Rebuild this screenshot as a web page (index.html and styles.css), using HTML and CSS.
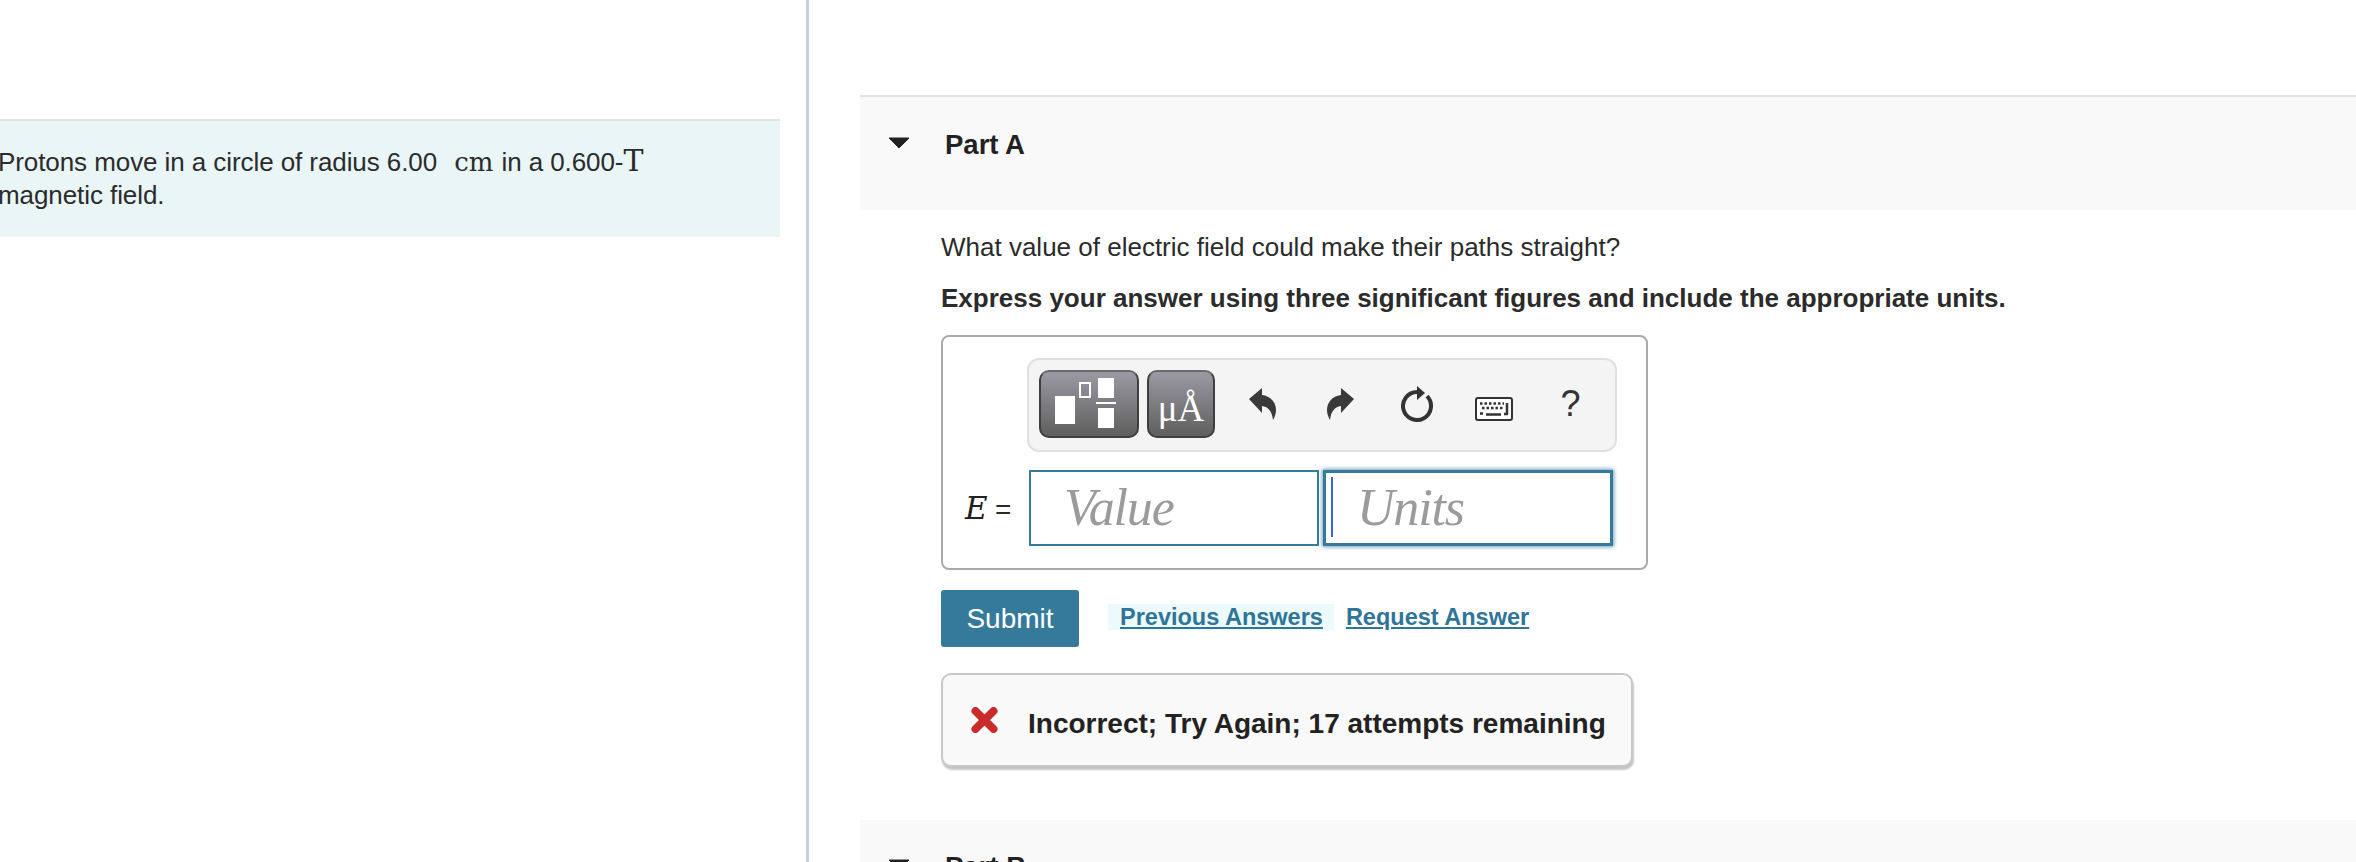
FILE: index.html
```html
<!DOCTYPE html>
<html lang="en">
<head>
<meta charset="utf-8">
<title>Part A</title>
<link rel="stylesheet" href="styles.css">
</head>
<body>
<div class="page">
  <aside class="left">
    <div class="intro">
      <p class="intro-text">Protons move in a circle of radius 6.00 <span class="math unit">cm</span> in a 0.600-<span class="math">T</span><br>magnetic field.</p>
    </div>
  </aside>
  <main class="right">
    <section class="part-head">
      <svg class="caret" width="22" height="12" viewBox="0 0 22 12"><path d="M1 1h20L11 11z" fill="#222" stroke="#222" stroke-linejoin="round"/></svg>
      <h2 class="part-title">Part A</h2>
    </section>
    <section class="part-body">
      <p class="question">What value of electric field could make their paths straight?</p>
      <p class="instruction">Express your answer using three significant figures and include the appropriate units.</p>
      <div class="answer-box">
        <div class="toolbar">
          <button class="tool-dark tool-templates" aria-label="Templates">
            <svg class="tool-svg" width="96" height="64" viewBox="0 0 96 64"><rect x="14" y="24" width="20" height="28" fill="#fff"/><rect x="39" y="11" width="10" height="14" fill="none" stroke="#fff" stroke-width="2"/><rect x="57" y="6" width="16" height="20" fill="#fff"/><rect x="55" y="30" width="20" height="2" fill="#fff"/><rect x="57" y="36" width="16" height="20" fill="#fff"/></svg>
          </button>
          <button class="tool-dark tool-units">μÅ</button>
          <span class="tool-icon tool-first tool-raised">
            <svg class="tool-svg" width="28" height="32" viewBox="0 0 28 32"><path d="M0 11 13 0v7c9 1 14 8 14 15 0 3-1 7-3 10-1-8-4-13-11-14v7z" fill="#3a3a3a"/></svg>
          </span>
          <span class="tool-icon tool-raised">
            <svg class="tool-svg" width="28" height="32" viewBox="0 0 28 32"><path d="M28 11 15 0v7C6 8 1 15 1 22c0 3 1 7 3 10 1-8 4-13 11-14v7z" fill="#3a3a3a"/></svg>
          </span>
          <span class="tool-icon">
            <svg class="tool-svg" width="34" height="38" viewBox="0 0 34 38"><path d="M27 10.200A14 14 0 1 1 17 6" fill="none" stroke="#333" stroke-width="4"/><path d="M17 0l8 7-8 7z" fill="#333"/></svg>
          </span>
          <span class="tool-icon tool-keys">
            <svg class="tool-svg" width="38" height="24" viewBox="0 0 38 24"><rect x="1" y="1" width="36" height="22" rx="2" fill="#fff" stroke="#333" stroke-width="2"/><path d="M5 6.500h24M7 11h22" stroke="#333" stroke-width="2.500" stroke-dasharray="2.500 2"/><path d="M5 16.500h3M11 17.500h15M29 17h4M32 6v11" stroke="#333" stroke-width="2.500"/></svg>
          </span>
          <span class="tool-icon tool-help tool-raised">?</span>
        </div>
        <div class="input-row">
          <span class="var"><i>E</i> <span class="eq">=</span></span>
          <div class="field field-value"><span class="placeholder">Value</span></div>
          <div class="field field-units"><span class="cursor"></span><span class="placeholder">Units</span></div>
        </div>
      </div>
      <div class="actions">
        <button class="submit">Submit</button>
        <a class="link link-prev" href="#">Previous Answers</a>
        <a class="link" href="#">Request Answer</a>
      </div>
      <div class="feedback">
        <svg class="x-icon" width="27" height="26" viewBox="0 0 27 26"><path d="M4.500 4 22.500 22M22.500 4 4.500 22" stroke="#c92a2a" stroke-width="8" stroke-linecap="round"/></svg>
        <span class="feedback-text">Incorrect; Try Again; 17 attempts remaining</span>
      </div>
    </section>
    <section class="part-head part-b">
      <svg class="caret" width="22" height="12" viewBox="0 0 22 12"><path d="M1 1h20L11 11z" fill="#222" stroke="#222" stroke-linejoin="round"/></svg>
      <h2 class="part-title">Part B</h2>
    </section>
  </main>
</div>
</body>
</html>
```
FILE: styles.css
```css
* { box-sizing: border-box; }
html, body { margin: 0; height: 100%; overflow: hidden; background: #fff; }
body { font-family: "Liberation Sans", Arial, sans-serif; color: #2b2b2b; font-size: 26px; }
.page { display: flex; height: 862px; overflow: hidden; }
.left { width: 809px; flex: none; border-right: 3px solid #c3cfdf; padding-top: 119px; padding-right: 26px; }
.intro { height: 118px; background: #e9f5f7; border-top: 2px solid #dfe3e4; overflow: hidden; }
.intro-text { margin: 0 0 0 -2px; padding-top: 25px; line-height: 33px; white-space: nowrap; letter-spacing: -0.08px; }
.math { font-family: "DejaVu Serif", "Liberation Serif", serif; font-size: 30px; line-height: 1; }
.unit { margin-left: 10px; margin-right: 1px; font-size: 26px; }
.right { flex: 1; min-width: 0; padding-left: 51px; padding-top: 95px; }
.part-head { display: flex; align-items: flex-start; height: 115px; background: #f9f9f9; border-top: 2px solid #e2e2e2; padding: 38px 0 0 28px; }
.caret { flex: none; margin-top: 2px; }
.part-title { margin: -7px 0 0 35px; font-size: 27.500px; line-height: 34px; font-weight: 700; color: #222; }
.part-body { padding-left: 81px; height: 610px; }
.question { margin: 0; padding-top: 20px; line-height: 34px; }
.instruction { margin: 17px 0 0; line-height: 34px; font-weight: 700; }
.answer-box { width: 707px; height: 235px; margin-top: 20px; border: 2px solid #aaa; border-radius: 8px; padding: 21px 0 0 84px; }
.toolbar { display: flex; align-items: center; width: 590px; height: 94px; background: #f4f4f4; border: 2px solid #e0e0e0; border-radius: 12px; padding: 10px; }
.tool-dark { padding: 0; flex: none; color: #fff; height: 68px; margin-bottom: 2px; border: 2px solid #3f3f3f; border-top-color: #6a6a6a; border-radius: 10px; background: linear-gradient(#9b99a3, #5f5f5f); display: flex; align-items: center; justify-content: center; }
.tool-templates { width: 100px; }
.tool-units { width: 68px; margin-left: 8px; font-family: "Liberation Serif", serif; font-size: 37px; line-height: 1; padding-top: 8px; }
.tool-svg { flex: none; display: block; }
.tool-icon { width: 77px; display: flex; justify-content: center; align-items: center; flex: none; }
.tool-first { margin-left: 9px; }
.tool-raised { padding-bottom: 2px; }
.tool-keys { padding-top: 8px; }
.tool-help { font-size: 36px; color: #333; }
.input-row { display: flex; align-items: center; margin: 18px 0 0 -64px; }
.var { width: 66px; flex: none; white-space: nowrap; padding-left: 2px; }
.var i { font-family: "DejaVu Serif", serif; font-size: 31px; font-weight: 400; color: #222; }
.eq { font-size: 28px; }
.field { height: 76px; width: 290px; flex: none; border: 2px solid #337a9c; background: #fff; display: flex; align-items: center; }
.field-value { padding: 0 0 2px 33px; }
.field-units { position: relative; margin-left: 4px; border-width: 3px; padding: 0 0 2px 31px; box-shadow: 0 0 4px 1px #6d9fb8; }
.placeholder { font-family: "Liberation Serif", serif; font-style: italic; font-size: 52px; letter-spacing: -1.200px; color: #9b9b9b; }
.cursor { position: absolute; left: 5px; top: 4px; width: 2px; height: 60px; background: #3a63d8; }
.actions { display: flex; align-items: center; margin-top: 20px; }
.submit { width: 138px; height: 57px; border: 0; border-radius: 3px; background: #35799b; color: #fff; font: 28px "Liberation Sans", sans-serif; }
.link { color: #2f7598; font-weight: 700; font-size: 23.500px; line-height: 26px; text-decoration: underline; padding: 0 12px; margin-bottom: 4px; }
.link-prev { margin-left: 29px; padding-right: 11px; background: #ecf9fd; }
.feedback { display: flex; align-items: center; width: 692px; height: 94px; margin-top: 26px; padding-left: 28px; background: #f9f9f9; border: 2px solid #c8c8c8; border-radius: 10px; box-shadow: 1px 3px 2px #c4c4c4; }
.x-icon { flex: none; }
.feedback-text { margin-left: 30px; padding-top: 7px; font-weight: 700; font-size: 28px; color: #222; white-space: nowrap; }
.part-b { height: 60px; border-top: 0; padding-top: 37px; }
```
